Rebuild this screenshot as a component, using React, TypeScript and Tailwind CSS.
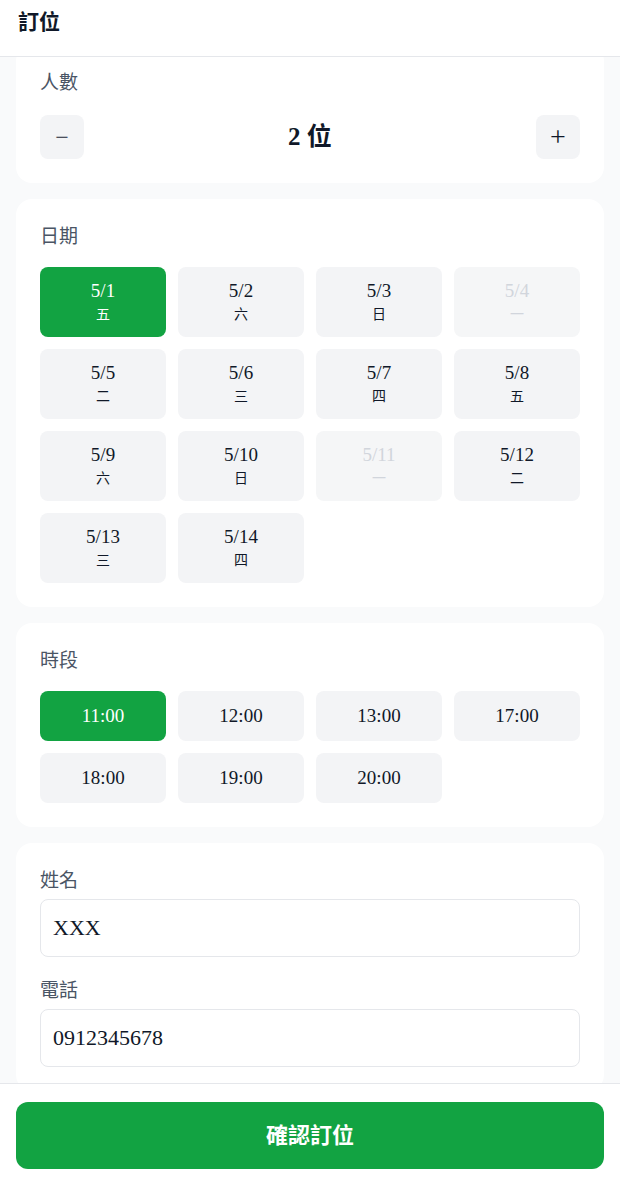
import React, { useState } from 'react';

type DateOption = { date: string; weekday: string; disabled?: boolean };

const dates: DateOption[] = [
  { date: '5/1', weekday: '五' },
  { date: '5/2', weekday: '六' },
  { date: '5/3', weekday: '日' },
  { date: '5/4', weekday: '一', disabled: true },
  { date: '5/5', weekday: '二' },
  { date: '5/6', weekday: '三' },
  { date: '5/7', weekday: '四' },
  { date: '5/8', weekday: '五' },
  { date: '5/9', weekday: '六' },
  { date: '5/10', weekday: '日' },
  { date: '5/11', weekday: '一', disabled: true },
  { date: '5/12', weekday: '二' },
  { date: '5/13', weekday: '三' },
  { date: '5/14', weekday: '四' },
];

const times = ['11:00', '12:00', '13:00', '17:00', '18:00', '19:00', '20:00'];

const Card: React.FC<{ title: string; children: React.ReactNode }> = ({ title, children }) => (
  <section className="bg-white rounded-2xl p-6">
    <h2 className="text-[19px] leading-7 text-gray-600 mb-4">{title}</h2>
    {children}
  </section>
);

const App: React.FC = () => {
  const [guests, setGuests] = useState(2);
  const [selectedDate, setSelectedDate] = useState('5/1');
  const [selectedTime, setSelectedTime] = useState('11:00');
  const [name, setName] = useState('XXX');
  const [phone, setPhone] = useState('0912345678');

  return (
    <div
      className="h-screen flex flex-col bg-gray-50 text-gray-900"
      style={{ fontFamily: '"Liberation Serif", "Noto Sans CJK TC", serif' }}
    >
      <header className="h-[57px] shrink-0 bg-white border-b border-gray-200 px-[18px] pt-2 z-10">
        <h1 className="text-[21px] leading-7 font-bold text-gray-900">訂位</h1>
      </header>

      <main className="flex-1 overflow-hidden">
        <div className="-mt-3 px-4 flex flex-col gap-4">
          {/* guests */}
          <section className="bg-white rounded-2xl p-6">
            <h2 className="text-[19px] leading-7 text-gray-600 mb-[18px]">人數</h2>
            <div className="flex items-center justify-between">
              <button
                onClick={() => setGuests(Math.max(1, guests - 1))}
                className="w-11 h-11 rounded-lg bg-gray-100 flex items-center justify-center text-2xl text-gray-800"
              >
                −
              </button>
              <span className="text-[25px] font-bold">{guests} 位</span>
              <button
                onClick={() => setGuests(guests + 1)}
                className="w-11 h-11 rounded-lg bg-gray-100 flex items-center justify-center text-[28px] text-gray-900"
              >
                +
              </button>
            </div>
          </section>

          <Card title="日期">
            <div className="grid grid-cols-4 gap-3">
              {dates.map((d) => {
                const active = d.date === selectedDate;
                return (
                  <button
                    key={d.date}
                    disabled={d.disabled}
                    onClick={() => setSelectedDate(d.date)}
                    className={`h-[70px] rounded-lg flex flex-col items-center justify-center ${
                      active
                        ? 'bg-[#12a342] text-white'
                        : d.disabled
                        ? 'bg-[#f5f6f7] text-gray-300'
                        : 'bg-gray-100 text-gray-900'
                    }`}
                  >
                    <span className="text-[19px] leading-6">{d.date}</span>
                    <span className="text-sm leading-5 mt-0.5">{d.weekday}</span>
                  </button>
                );
              })}
            </div>
          </Card>

          <Card title="時段">
            <div className="grid grid-cols-4 gap-3">
              {times.map((t) => {
                const active = t === selectedTime;
                return (
                  <button
                    key={t}
                    onClick={() => setSelectedTime(t)}
                    className={`h-[50px] rounded-lg text-[19px] ${
                      active ? 'bg-[#12a342] text-white' : 'bg-gray-100 text-gray-900'
                    }`}
                  >
                    {t}
                  </button>
                );
              })}
            </div>
          </Card>

          <section className="bg-white rounded-2xl p-6 flex flex-col gap-5">
            <label className="flex flex-col gap-1">
              <span className="text-[19px] leading-7 text-gray-600">姓名</span>
              <input
                value={name}
                onChange={(e) => setName(e.target.value)}
                className="h-[58px] border border-gray-200 rounded-lg px-3 text-[22px] text-gray-900 outline-none"
              />
            </label>
            <label className="flex flex-col gap-1">
              <span className="text-[19px] leading-7 text-gray-600">電話</span>
              <input
                value={phone}
                onChange={(e) => setPhone(e.target.value)}
                className="h-[58px] border border-gray-200 rounded-lg px-3 text-[22px] text-gray-900 outline-none"
              />
            </label>
          </section>
        </div>
      </main>

      <footer className="shrink-0 bg-white border-t border-gray-200 px-4 pt-[18px] pb-[17px]">
        <button className="w-full h-[67px] rounded-xl bg-[#12a342] text-white text-[22px] font-bold">
          確認訂位
        </button>
      </footer>
    </div>
  );
};

export default App;
